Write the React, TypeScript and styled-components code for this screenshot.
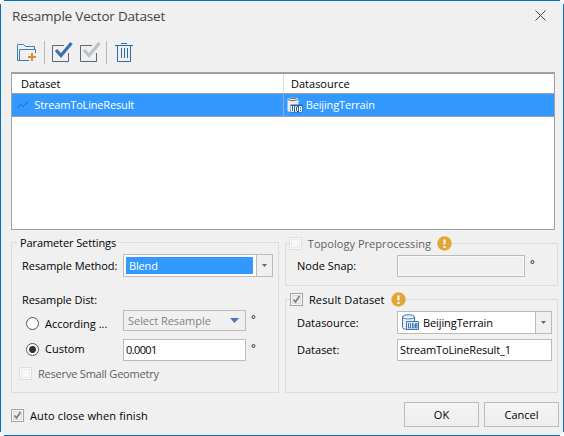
import React from 'react';
import styled, { createGlobalStyle, css } from 'styled-components';

const Global = createGlobalStyle`
  * { box-sizing: border-box; }
  html, body { margin: 0; padding: 0; background: #fff; }
  body { font: 11px/14px "Open Sans", "Noto Sans", sans-serif; color: #000; overflow: hidden; }
  svg { display: block; flex: none; }
`;

const Window = styled.div`
  position: relative;
  width: 564px;
  height: 436px;
  padding: 0 4px 0 10px;
  border: 1px solid #0173c7;
  background: #f0f0f0;
  display: flex;
  flex-direction: column;
`;

const Corner = styled.i<{ $right?: boolean; $bottom?: boolean }>`
  position: absolute;
  width: 4px;
  height: 4px;
  ${p => (p.$right ? 'right: -1px;' : 'left: -1px;')}
  ${p => (p.$bottom ? 'bottom: -1px;' : 'top: -1px;')}
  background: radial-gradient(circle at ${p => (p.$right ? '0' : '100%')} ${p => (p.$bottom ? '0' : '100%')}, #f0f0f0 3px, #fff 4px);
`;

const TextRun = styled.span<{ $ls?: number; $muted?: boolean }>`
  white-space: pre;
  letter-spacing: ${p => p.$ls ?? 0}px;
  ${p => p.$muted && css`color: #606060;`}
`;

const TitleBar = styled.header`
  flex: none;
  height: 38px;
  padding: 5px 13px 0 1px;
  display: flex;
  justify-content: space-between;
  align-items: flex-start;
  font-size: 13.5px;
  line-height: 20px;
  color: #444;
  svg { margin-top: 4px; }
`;

const Toolbar = styled.nav`
  flex: none;
  height: 33px;
  padding: 2px 0 0 5px;
  display: flex;
  align-items: flex-start;
`;

const Separator = styled.i<{ $before: number; $after: number }>`
  width: 1px;
  height: 23px;
  margin: 0 ${p => p.$after}px 0 ${p => p.$before}px;
  background: #b8b8b8;
`;

const CheckTools = styled.div`
  display: flex;
  gap: 7px;
`;

const Table = styled.section`
  flex: none;
  width: 544px;
  height: 158px;
  border: 1px solid #a0a0a5;
  border-top: 2px solid #a0a0a5;
  background: #fff;
`;

const TableRow = styled.div<{ $selected?: boolean }>`
  display: grid;
  grid-template-columns: 271px 1fr;
  height: ${p => (p.$selected ? 23 : 20)}px;
  border-bottom: 1px solid #a0a0a5;
  ${p => p.$selected && css`background: #3399ff; color: #fff;`}
`;

const Cell = styled.div<{ $icon?: boolean }>`
  display: flex;
  align-items: center;
  padding-left: ${p => (p.$icon ? 5 : 9)}px;
  & + & {
    border-left: 1px solid ${p => (p.$icon ? '#9aa9bd' : '#dcdcdc')};
    padding-left: ${p => (p.$icon ? 3 : 7)}px;
  }
`;

const HeadCell = styled(Cell)`
  & + & { padding-left: 7px; border-left: 1px solid #dcdcdc; }
  &:last-child > span { margin-left: 0; }
`;

const Panels = styled.main`
  flex: none;
  display: grid;
  grid-template-columns: 268px 273px;
  column-gap: 6px;
  height: 163px;
  padding-top: 12px;
`;

const Column = styled.div`
  display: flex;
  flex-direction: column;
`;

const Group = styled.section<{ $h: number; $top?: number }>`
  flex: none;
  height: ${p => p.$h}px;
  margin-top: ${p => p.$top ?? 0}px;
  border: 1px solid #dcdcdc;
`;

const Legend = styled.div<{ $left: number; $pad: number }>`
  width: max-content;
  height: 15px;
  margin: -8px 0 0 ${p => p.$left}px;
  padding: 0 ${p => p.$pad}px;
  display: flex;
  align-items: center;
  background: #f0f0f0;
`;

const Field = styled.div<{ $top: number; $h?: number; $label: number; $pad?: number }>`
  display: grid;
  grid-template-columns: ${p => p.$label}px auto 1fr;
  align-items: center;
  height: ${p => p.$h ?? 22}px;
  margin-top: ${p => p.$top}px;
  padding-left: ${p => p.$pad ?? 10}px;
`;

const Option = styled.div<{ $drop?: number; $lift?: number }>`
  display: flex;
  align-items: center;
  gap: 6px;
  padding: ${p => p.$drop ?? 0}px 0 ${p => p.$lift ?? 0}px;
`;

const Radio = styled.i<{ $on?: boolean }>`
  width: 13px;
  height: 13px;
  border: 1px solid #555;
  border-radius: 50%;
  background: ${p => (p.$on ? 'radial-gradient(circle, #333 3px, #fff 4px)' : '#fff')};
`;

const Box = styled.i<{ $on?: boolean }>`
  flex: none;
  width: 13px;
  height: 13px;
  border: 1px solid ${p => (p.$on ? '#a4a4a4' : '#dedede')};
  background: ${p => (p.$on ? '#eee' : '#f8f8f8')};
  box-shadow: inset 0 0 0 1px #f8f8f8, inset 0 0 0 2px ${p => (p.$on ? '#ddd' : '#ececec')};
`;

const Input = styled.div<{ $w: number; $h?: number; $disabled?: boolean }>`
  width: ${p => p.$w}px;
  height: ${p => p.$h ?? 22}px;
  padding-left: 2px;
  display: flex;
  align-items: center;
  border: 1px solid #bcbcbc;
  background: ${p => (p.$disabled ? '#f0f0f0' : '#fff')};
  ${p => p.$disabled && css`box-shadow: inset 0 0 0 1px #fafafa;`}
`;

const Combo = styled(Input)`
  justify-content: space-between;
`;

const FlatCombo = styled(Combo)`
  padding: 0 6px 0 4px;
  box-shadow: none;
  color: #838383;
`;

const Chosen = styled.span`
  display: flex;
  align-items: center;
  width: 127px;
  height: 17px;
  padding-left: 3px;
  background: #3399ff;
  color: #fff;
`;

const ComboValue = styled.span`
  display: flex;
  align-items: center;
  gap: 4px;
  padding-left: 2px;
`;

const DropButton = styled.span`
  display: flex;
  align-items: center;
  justify-content: center;
  width: 16px;
  height: 100%;
  border-left: 1px solid #bcbcbc;
  background: #f0f0f0;
`;

const Degree = styled.span`
  align-self: start;
  padding: 1px 0 0 5px;
  line-height: 16px;
`;

const CheckLine = styled.div<{ $top: number; $left: number }>`
  display: flex;
  align-items: center;
  gap: 6px;
  height: 15px;
  margin: ${p => p.$top}px 0 0 ${p => p.$left}px;
`;

const Footer = styled.footer`
  display: flex;
  justify-content: space-between;
  padding-top: 9px;
`;

const Buttons = styled.div`
  display: flex;
  gap: 5px;
`;

const Button = styled.button`
  width: 75px;
  height: 25px;
  padding: 0;
  border: 1px solid #bcbcbc;
  background: linear-gradient(#f4f4f4, #eeeeee);
  font: inherit;
  color: #000;
`;

const CloseIcon = () => (
  <svg width="11" height="11" viewBox="0 0 11 11" stroke="#444" strokeWidth="1">
    <path d="M.5.5l10 10M10.5.5l-10 10" />
  </svg>
);

const FolderIcon = () => (
  <svg width="21" height="20" viewBox="0 0 21 20" fill="none" stroke="#3d7ebf" strokeWidth="1">
    <path d="M13 19.500H1.500V3.500H7.500L9.500 5.500H18.500V8.500M3.500 19V8.500H19.500V12" />
    <path d="M12 16H20M16 12V20" stroke="#e08b2c" strokeWidth="2" />
  </svg>
);

const CheckToolIcon = ({ mark }: { mark: string }) => (
  <svg width="21" height="22" viewBox="0 0 21 22" fill="none">
    <path d="M12 4.500H.5V20.500H16.500V12" stroke="#59657a" />
    <path d="M4 9l5 5.500L19.500 2" stroke={mark} strokeWidth="3.200" />
  </svg>
);

const TrashIcon = () => (
  <svg width="20" height="22" viewBox="0 0 20 22" fill="none" stroke="#2d6ca8">
    <path d="M0 4.500H18M6 2.500H12M2.500 5V20.500H15.500V5M6.500 7V17M9.500 7V17M12.500 7V17" />
  </svg>
);

const LineIcon = () => (
  <svg width="12" height="8" viewBox="0 0 12 8" fill="none" stroke="#1f66c8" strokeWidth="1">
    <path d="M0 6.500L4 3.500L6 5.500L11.500.5" />
  </svg>
);

const LightUdbIcon = () => (
  <svg width="16" height="16" viewBox="0 0 16 16" fill="none">
    <path d="M.5 2.500C.5 0 11.500 0 11.500 2.500V8H4V15C2 14.800.5 14.300.5 13.500z" fill="#e9edf1" />
    <path d="M1 2.500c2 1.600 8 1.600 10 0M3 1.500h6" stroke="#68727c" />
    <path d="M3.500 7.500h12v8h-12z" fill="#2b62a0" />
    <path d="M4.500 9v5.500h2V9M8.500 9.500h1l1 1v3l-1 1h-1zM12.500 9.500h2v5h-2zM12.500 12h2" stroke="#fff" />
  </svg>
);

const UdbIcon = () => (
  <svg width="17" height="17" viewBox="0 0 17 17" fill="none" stroke="#3f78b3">
    <path d="M6 15.500C3 15.500.5 14.800.5 13.500V3C.5 0 12.500 0 12.500 3V7.500" fill="#e6eef6" />
    <path d="M.5 3c0 2.500 12 2.500 12 0" fill="#fff" />
    <path d="M4.500 7.500h12v8h-12z" fill="#dfeaf5" />
    <path d="M6.500 9v5h2V9M10.500 9.500h1l.500.500v4h-1.500zM13.500 9.500h1.500v4.500h-1.500zM13.500 11.500h1.500" />
  </svg>
);

const WarnIcon = () => (
  <svg width="15" height="15" viewBox="0 0 15 15">
    <circle cx="7.500" cy="7.500" r="7.200" fill="#e0a637" />
    <path d="M6.500 3.500h2v5h-2zM6.500 10h2v2h-2z" fill="#fff" />
  </svg>
);

const CheckMark = () => (
  <svg width="11" height="11" viewBox="0 0 11 11" fill="none">
    <path d="M2.500 5.500L4.500 8L8.500 2" stroke="#808080" strokeWidth="1.800" />
  </svg>
);

const Caret = ({ large }: { large?: boolean }) =>
  large ? (
    <svg width="9" height="5" viewBox="0 0 9 5"><path d="M0 0h9L4.500 5z" fill="#4f74b5" /></svg>
  ) : (
    <svg width="5" height="3" viewBox="0 0 5 3"><path d="M0 0h5L2.500 3z" fill="#666" /></svg>
  );

export default function App() {
  return (
    <>
      <Global />
      <Window>
        <Corner />
        <Corner $right />
        <Corner $bottom />
        <Corner $right $bottom />
        <TitleBar>
          <TextRun $ls={-0.2}>Resample Vector Dataset</TextRun>
          <CloseIcon />
        </TitleBar>
        <Toolbar>
          <FolderIcon />
          <Separator $before={7} $after={7} />
          <CheckTools>
            <CheckToolIcon mark="#3c72aa" />
            <CheckToolIcon mark="#bcc3cd" />
          </CheckTools>
          <Separator $before={5} $after={8} />
          <TrashIcon />
        </Toolbar>
        <Table>
          <TableRow>
            <HeadCell><TextRun>Dataset</TextRun></HeadCell>
            <HeadCell><TextRun>Datasource</TextRun></HeadCell>
          </TableRow>
          <TableRow $selected>
            <Cell $icon><LineIcon /><TextRun $ls={-0.17}>  StreamToLineResult</TextRun></Cell>
            <Cell $icon><LightUdbIcon /><TextRun $ls={-0.15}> BeijingTerrain</TextRun></Cell>
          </TableRow>
        </Table>
        <Panels>
          <Group $h={151}>
            <Legend $left={5} $pad={3}><TextRun $ls={-0.1}>Parameter Settings</TextRun></Legend>
            <Field $top={4} $h={23} $label={101}>
              <TextRun $ls={-0.04}>Resample Method:</TextRun>
              <Combo $w={150} $h={23}>
                <Chosen><TextRun $ls={-0.15}>Blend</TextRun></Chosen>
                <DropButton><Caret /></DropButton>
              </Combo>
            </Field>
            <Field $top={12} $label={101}>
              <TextRun $ls={-0.06}>Resample Dist:</TextRun>
            </Field>
            <Field $top={-1} $h={21} $label={97} $pad={14}>
              <Option $drop={6}><Radio /><TextRun>According ...</TextRun></Option>
              <FlatCombo $w={123} $h={21} $disabled>
                <TextRun $ls={-0.04}>Select Resample</TextRun>
                <Caret large />
              </FlatCombo>
              <Degree>°</Degree>
            </Field>
            <Field $top={8} $label={97} $pad={14}>
              <Option $lift={2}><Radio $on /><TextRun>Custom</TextRun></Option>
              <Input $w={123}><TextRun $ls={-0.6}>0.0001</TextRun></Input>
              <Degree>°</Degree>
            </Field>
            <CheckLine $top={5} $left={7}><Box /><TextRun $muted $ls={-0.2}>Reserve Small Geometry</TextRun></CheckLine>
          </Group>
          <Column>
            <Group $h={43} $top={1}>
              <Legend $left={3} $pad={0}><Box /><TextRun $muted $ls={0.04}>  Topology Preprocessing  </TextRun><WarnIcon /></Legend>
              <Field $top={4} $label={100} $pad={11}>
                <TextRun>Node Snap:</TextRun>
                <Input $w={128} $disabled />
                <Degree>°</Degree>
              </Field>
            </Group>
            <Group $h={94} $top={13}>
              <Legend $left={4} $pad={0}><Box $on><CheckMark /></Box><TextRun $ls={0.12}>  Result Dataset  </TextRun><WarnIcon /></Legend>
              <Field $top={4} $h={23} $label={100} $pad={11}>
                <TextRun>Datasource:</TextRun>
                <Combo $w={155} $h={23}>
                  <ComboValue><UdbIcon /><TextRun $ls={-0.1}>BeijingTerrain</TextRun></ComboValue>
                  <DropButton><Caret /></DropButton>
                </Combo>
              </Field>
              <Field $top={5} $label={100} $pad={11}>
                <TextRun>Dataset:</TextRun>
                <Input $w={155}><TextRun $ls={-0.15}>StreamToLineResult_1</TextRun></Input>
              </Field>
            </Group>
          </Column>
        </Panels>
        <Footer>
          <CheckLine $top={6} $left={0}><Box $on><CheckMark /></Box><TextRun $ls={0.13}>Auto close when finish</TextRun></CheckLine>
          <Buttons><Button>OK</Button><Button>Cancel</Button></Buttons>
        </Footer>
      </Window>
    </>
  );
}
